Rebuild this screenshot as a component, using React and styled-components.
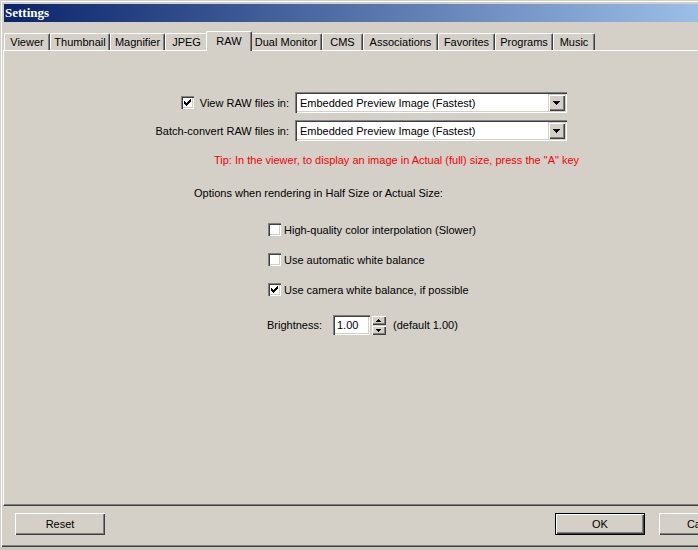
import React from "react";
import styled, { createGlobalStyle } from "styled-components";

const Global = createGlobalStyle`
  html, body { margin: 0; padding: 0; background: #c8c5bf; overflow: hidden; }
  body { font-family: "Liberation Sans", Arial, sans-serif; font-size: 11px; color: #000; }
  * { box-sizing: border-box; }
`;

const Window = styled.div`
  width: 752px;
  height: 547px;
  background: #d4d0c8;
  padding: 4px 3px 3px 3px;
  display: flex;
  flex-direction: column;
  box-shadow: inset 1px 1px 0 #d4d0c8, inset 2px 2px 0 #ffffff,
    inset -1px -1px 0 #404040, inset -2px -2px 0 #808080;
`;

const TitleBar = styled.div`
  height: 18px;
  margin-left: 1px;
  background: linear-gradient(to right, #0a246a, #a6caf0);
  display: flex;
  align-items: center;
  padding-left: 1px;
  color: #fff;
  font-family: "Liberation Serif", "Times New Roman", serif;
  font-weight: bold;
  font-size: 13px;
`;

const TabRow = styled.div`
  margin-top: 9px;
  height: 19px;
  display: flex;
  align-items: flex-end;
  padding-left: 1px;
  position: relative;
  z-index: 2;
`;

const Tab = styled.div`
  width: ${(p) => p.$w}px;
  height: ${(p) => (p.$active ? 20 : 17)}px;
  margin: 0 ${(p) => (p.$active ? -2 : 0)}px ${(p) => (p.$active ? -1 : 0)}px;
  background: #d4d0c8;
  border-top: 1px solid #fff;
  border-left: 1px solid #fff;
  border-right: 1px solid #404040;
  border-radius: 2px 2px 0 0;
  box-shadow: inset -1px 0 0 #808080;
  display: flex;
  align-items: ${(p) => (p.$active ? "flex-start" : "center")};
  padding-top: ${(p) => (p.$active ? 3 : 0)}px;
  justify-content: center;
  white-space: nowrap;
  position: relative;
  z-index: ${(p) => (p.$active ? 2 : 1)};
`;

const Panel = styled.div`
  flex: 1;
  border-top: 1px solid #fff;
  border-left: 1px solid #fff;
  border-bottom: 1px solid #404040;
  box-shadow: inset 0 -1px 0 #808080;
  padding-top: 41px;
  display: flex;
  flex-direction: column;
`;

const ComboGrid = styled.div`
  margin-left: 146px;
  display: grid;
  grid-template-columns: 139px 272px;
  column-gap: 6px;
  row-gap: 7px;
  align-items: center;
`;

const FieldLabel = styled.div`
  display: flex;
  justify-content: flex-end;
  align-items: center;
  gap: 6px;
  white-space: nowrap;
`;

const Combo = styled.div`
  height: 21px;
  background: #fff;
  box-shadow: inset 1px 1px 0 #808080, inset 2px 2px 0 #404040,
    inset -1px -1px 0 #fff, inset -2px -2px 0 #d4d0c8;
  padding: 2px;
  display: flex;
  align-items: center;
`;

const ComboText = styled.span`
  flex: 1;
  padding-left: 3px;
`;

const RaisedBtn = styled.div`
  width: ${(p) => p.$w}px;
  height: ${(p) => p.$h}px;
  background: #d4d0c8;
  box-shadow: inset 1px 1px 0 #d4d0c8, inset 2px 2px 0 #fff,
    inset -1px -1px 0 #404040, inset -2px -2px 0 #808080;
  display: flex;
  align-items: center;
  justify-content: center;
`;

const Tip = styled.div`
  margin-top: 13px;
  padding-left: 210px;
  color: #ff0000;
  line-height: 13px;
`;

const Options = styled.div`
  margin-top: 20px;
  padding-left: 190px;
  line-height: 13px;
`;

const CheckList = styled.div`
  margin-top: 23px;
  padding-left: 264px;
  display: flex;
  flex-direction: column;
  gap: 17px;
`;

const CheckRow = styled.label`
  display: flex;
  align-items: center;
  gap: 3px;
  height: 13px;
  white-space: nowrap;
`;

const Box = styled.span`
  width: 13px;
  height: 13px;
  flex: none;
  background: #fff;
  box-shadow: inset 1px 1px 0 #808080, inset 2px 2px 0 #404040,
    inset -1px -1px 0 #fff, inset -2px -2px 0 #d4d0c8;
  display: flex;
  align-items: center;
  justify-content: center;
`;

const BrightRow = styled.div`
  margin-top: 19px;
  padding-left: 263px;
  display: flex;
  align-items: center;
  height: 20px;
`;

const BrightLabel = styled.span`
  width: 66px;
`;

const NumInput = styled.div`
  width: 37px;
  height: 20px;
  background: #fff;
  box-shadow: inset 1px 1px 0 #808080, inset 2px 2px 0 #404040,
    inset -1px -1px 0 #fff, inset -2px -2px 0 #d4d0c8;
  padding-left: 4px;
  display: flex;
  align-items: center;
`;

const Spinner = styled.div`
  display: flex;
  flex-direction: column;
  margin-left: 1px;
  margin-right: 7px;
`;

const Footer = styled.div`
  height: 38px;
  display: flex;
  align-items: flex-start;
  padding: 7px 0 0 12px;
  gap: 14px;
`;

const Button = styled.div`
  width: 90px;
  height: 22px;
  flex: none;
  background: #d4d0c8;
  display: flex;
  align-items: center;
  justify-content: center;
  border: ${(p) => (p.$default ? "1px solid #000" : "none")};
  box-shadow: inset 1px 1px 0 #fff, inset -1px -1px 0 #404040,
    inset -2px -2px 0 #808080;
  margin-left: ${(p) => (p.$push ? "auto" : "0")};
`;

const Check = () => (
  <svg width="7" height="7" viewBox="0 0 7 7" shapeRendering="crispEdges">
    <path d="M6 0h1v3h-1zM5 1h1v3h-1zM4 2h1v3h-1zM3 3h1v3h-1zM2 4h1v3h-1zM1 3h1v3h-1zM0 2h1v3h-1z" fill="#000" />
  </svg>
);

const Arrow = ({ up, w = 7 }) => (
  <svg width={w} height={Math.ceil(w / 2)} viewBox={`0 0 ${w} ${Math.ceil(w / 2)}`} shapeRendering="crispEdges">
    <path
      d={up ? `M${w / 2} 0 L${w} ${Math.ceil(w / 2)} L0 ${Math.ceil(w / 2)} Z` : `M0 0 L${w} 0 L${w / 2} ${Math.ceil(w / 2)} Z`}
      fill="#000"
    />
  </svg>
);

const tabs = [
  ["Viewer", 46],
  ["Thumbnail", 60],
  ["Magnifier", 55],
  ["JPEG", 43],
  ["RAW", 46, true],
  ["Dual Monitor", 72],
  ["CMS", 41],
  ["Associations", 75],
  ["Favorites", 57],
  ["Programs", 58],
  ["Music", 42],
];

const ComboBox = ({ value }) => (
  <Combo>
    <ComboText>{value}</ComboText>
    <RaisedBtn $w={17} $h={17}>
      <Arrow />
    </RaisedBtn>
  </Combo>
);

export default function App() {
  return (
    <>
      <Global />
      <Window>
        <TitleBar>Settings</TitleBar>
        <TabRow>
          {tabs.map(([t, w, a]) => (
            <Tab key={t} $w={w} $active={a}>
              {t}
            </Tab>
          ))}
        </TabRow>
        <Panel>
          <ComboGrid>
            <FieldLabel>
              <Box>
                <Check />
              </Box>
              <span>View RAW files in:</span>
            </FieldLabel>
            <ComboBox value="Embedded Preview Image (Fastest)" />
            <FieldLabel>Batch-convert RAW files in:</FieldLabel>
            <ComboBox value="Embedded Preview Image (Fastest)" />
          </ComboGrid>
          <Tip>Tip: In the viewer, to display an image in Actual (full) size, press the "A" key</Tip>
          <Options>Options when rendering in Half Size or Actual Size:</Options>
          <CheckList>
            <CheckRow>
              <Box />
              High-quality color interpolation (Slower)
            </CheckRow>
            <CheckRow>
              <Box />
              Use automatic white balance
            </CheckRow>
            <CheckRow>
              <Box>
                <Check />
              </Box>
              Use camera white balance, if possible
            </CheckRow>
          </CheckList>
          <BrightRow>
            <BrightLabel>Brightness:</BrightLabel>
            <NumInput>1.00</NumInput>
            <Spinner>
              <RaisedBtn $w={15} $h={10}>
                <Arrow up w={5} />
              </RaisedBtn>
              <RaisedBtn $w={15} $h={10}>
                <Arrow w={5} />
              </RaisedBtn>
            </Spinner>
            <span>(default 1.00)</span>
          </BrightRow>
        </Panel>
        <Footer>
          <Button>Reset</Button>
          <Button $default $push>OK</Button>
          <Button>Cancel</Button>
        </Footer>
      </Window>
    </>
  );
}
